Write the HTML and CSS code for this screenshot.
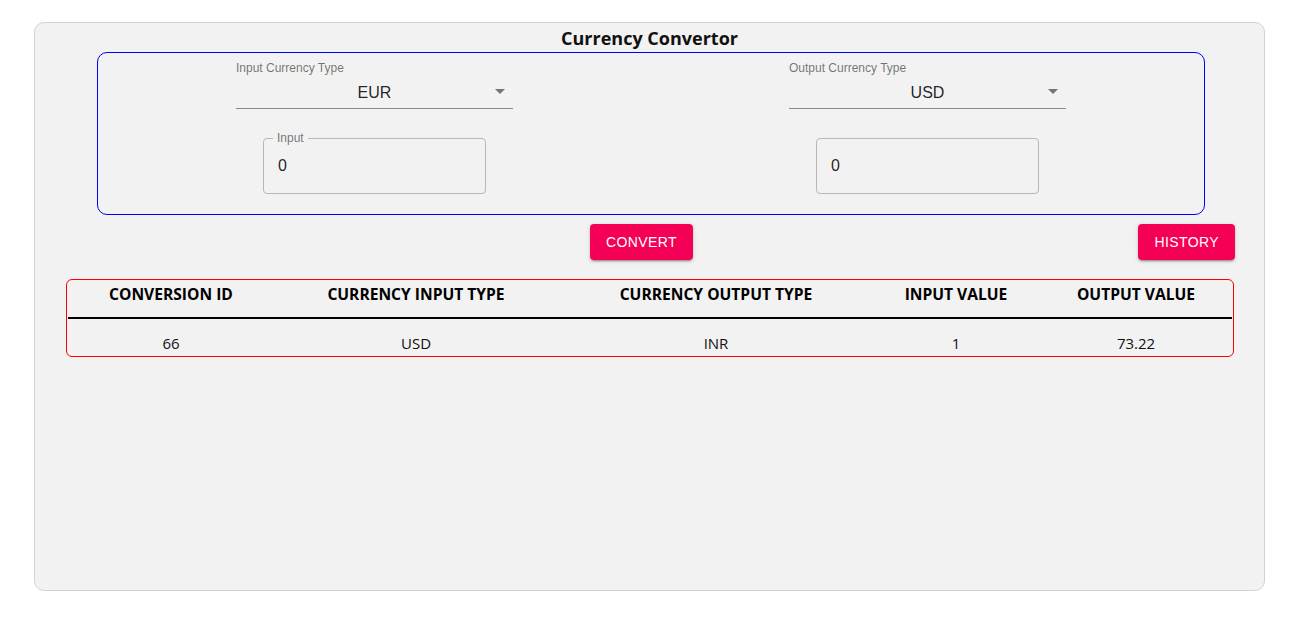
FILE: index.html
```html
<!DOCTYPE html>
<html>
<head>
<meta charset="utf-8">
<link rel="stylesheet" href="styles.css">
</head>
<body>
<div class="card">
  <h1 class="title">Currency Convertor</h1>
  <div class="panel">
    <div class="half">
      <div class="select">
        <div class="select-label">Input Currency Type</div>
        <div class="select-value">EUR<span class="arrow"></span></div>
      </div>
      <div class="field">
        <span class="legend">Input</span>
        <span class="field-value">0</span>
      </div>
    </div>
    <div class="half">
      <div class="select">
        <div class="select-label">Output Currency Type</div>
        <div class="select-value">USD<span class="arrow"></span></div>
      </div>
      <div class="field">
        <span class="field-value">0</span>
      </div>
    </div>
  </div>
  <div class="actions">
    <button class="btn">Convert</button>
    <button class="btn btn-right">History</button>
  </div>
  <div class="table">
    <div class="row head">
      <div>CONVERSION ID</div>
      <div>CURRENCY INPUT TYPE</div>
      <div>CURRENCY OUTPUT TYPE</div>
      <div>INPUT VALUE</div>
      <div>OUTPUT VALUE</div>
    </div>
    <div class="row body">
      <div>66</div>
      <div>USD</div>
      <div>INR</div>
      <div>1</div>
      <div>73.22</div>
    </div>
  </div>
</div>
</body>
</html>
```
FILE: styles.css
```css
* { box-sizing: border-box; }
body {
  margin: 0;
  background: #fff;
  font-family: "Open Sans", "Noto Sans", sans-serif;
}
.card {
  margin: 22px 38px 0 34px;
  width: 1231px;
  height: 569px;
  background: #f2f2f2;
  border: 1px solid #d3d3d3;
  border-radius: 10px;
  padding-top: 3px;
}
.title {
  margin: 0;
  text-align: center;
  font-size: 18px;
  font-weight: 700;
  line-height: 25px;
  color: #111;
}
.panel {
  margin: 1px 59px 0 62px;
  height: 163px;
  border: 1px solid #0000ff;
  border-radius: 10px;
  display: flex;
}
.half {
  flex: 1;
  display: flex;
  flex-direction: column;
  align-items: center;
  padding-top: 8px;
}
.select {
  width: 277px;
  font-family: "Liberation Sans", Arial, sans-serif;
}
.select-label {
  font-size: 12px;
  line-height: 14px;
  color: rgba(0,0,0,0.54);
}
.select-value {
  position: relative;
  height: 34px;
  padding-top: 8px;
  border-bottom: 1px solid #8a8a8a;
  text-align: center;
  font-size: 16px;
  line-height: 19px;
  color: rgba(0,0,0,0.87);
}
.arrow {
  position: absolute;
  right: 8px;
  top: 14px;
  width: 0;
  height: 0;
  border-left: 5px solid transparent;
  border-right: 5px solid transparent;
  border-top: 5px solid #757575;
}
.field {
  position: relative;
  margin-top: 29px;
  width: 223px;
  height: 56px;
  border: 1px solid #b8b8b8;
  border-radius: 4px;
  font-family: "Liberation Sans", Arial, sans-serif;
  padding: 17px 14px;
}
.legend {
  position: absolute;
  left: 9px;
  top: -7px;
  padding: 0 4px;
  background: #f2f2f2;
  font-size: 12px;
  line-height: 12px;
  color: rgba(0,0,0,0.54);
}
.field-value {
  font-size: 16px;
  line-height: 20px;
  color: rgba(0,0,0,0.87);
}
.actions {
  display: flex;
  margin-top: 9px;
  padding-left: 555px;
  padding-right: 29px;
}
.btn {
  background: #f50057;
  color: #fff;
  border: none;
  border-radius: 4px;
  height: 36px;
  padding: 0 16px;
  font-family: "Liberation Sans", Arial, sans-serif;
  font-size: 14px;
  font-weight: 400;
  text-transform: uppercase;
  letter-spacing: 0.4px;
  box-shadow: 0 3px 1px -2px rgba(0,0,0,0.2), 0 2px 2px 0 rgba(0,0,0,0.14), 0 1px 5px 0 rgba(0,0,0,0.12);
}
.btn-right { margin-left: auto; }
.table {
  margin: 19px 30px 0 31px;
  border: 1px solid #ff0000;
  border-radius: 6px;
  padding: 0 1px;
}
.row {
  display: grid;
  grid-template-columns: 206px 284px 316px 164px 196px;
  text-align: center;
  color: #000;
  font-size: 15.6px;
}
.head {
  font-weight: 700;
  height: 39px;
  padding-top: 3px;
  line-height: 22px;
  border-bottom: 2px solid #000;
}
.body {
  height: 37px;
  padding-top: 13px;
  line-height: 22px;
  font-size: 15px;
  color: #111;
}
```
